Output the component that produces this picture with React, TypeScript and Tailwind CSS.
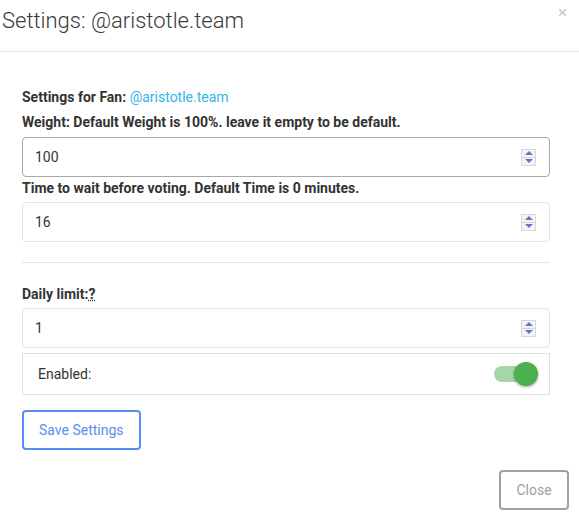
import React from "react";

function Spinner() {
  return (
    <div className="flex flex-col w-[15px] h-[17px] border border-[#d8d8d8] bg-[#f4f4f4]">
      <div className="flex-1 flex items-center justify-center border-b border-[#d8d8d8]">
        <div className="w-0 h-0 border-l-[4px] border-r-[4px] border-b-[4px] border-l-transparent border-r-transparent border-b-[#5d76c8]" />
      </div>
      <div className="flex-1 flex items-center justify-center">
        <div className="w-0 h-0 border-l-[4px] border-r-[4px] border-t-[4px] border-l-transparent border-r-transparent border-t-[#5d76c8]" />
      </div>
    </div>
  );
}

function NumField({ value, focused }: { value: string; focused?: boolean }) {
  return (
    <div
      className={`flex items-center justify-between h-[40px] rounded-[4px] border pl-[12px] pr-[13px] ${
        focused ? "border-[#a8a8a8]" : "border-[#e3e3e3]"
      }`}
    >
      <span className="text-[14px] text-[#333]">{value}</span>
      <Spinner />
    </div>
  );
}

export default function App() {
  return (
    <div
      className="w-[579px] h-[520px] bg-white text-[#333] relative"
      style={{ fontFamily: "Roboto, 'Liberation Sans', sans-serif" }}
    >
      <div className="h-[52px] border-b border-[#e5e5e5] flex items-start justify-between">
        <h4 className="text-[22px] font-light text-[#3a3a3a] pl-[2px] pt-[6px] leading-[30px]">
          Settings: @aristotle.team
        </h4>
        <span className="text-[#c8c8c8] text-[17px] leading-none pt-[4px] pr-[12px]">×</span>
      </div>
      <div className="pl-[22px] pr-[29px] pt-[36px] text-[14px]">
        <div className="font-bold leading-[18px]">
          Settings for Fan: <span className="font-normal text-[#33b5e5]">@aristotle.team</span>
        </div>
        <div className="font-bold leading-[18px] mt-[7px] mb-[6px]">
          Weight: Default Weight is 100%. leave it empty to be default.
        </div>
        <NumField value="100" focused />
        <div className="font-bold leading-[18px] mt-[2px] mb-[5px]">
          Time to wait before voting. Default Time is 0 minutes.
        </div>
        <NumField value="16" />
        <div className="border-t border-[#e5e5e5] mt-[20px]" />
        <div className="font-bold leading-[18px] mt-[22px] mb-[5px]">
          Daily limit:
          <abbr className="underline decoration-dotted">?</abbr>
        </div>
        <NumField value="1" />
        <div className="mt-[5px] h-[42px] border border-[#e0e0e0] flex items-center justify-between pl-[15px] pr-[13px]">
          <span className="text-[14px] text-[#333]">Enabled:</span>
          <div className="relative w-[42px] h-[24px] flex items-center">
            <div className="w-[40px] h-[16px] rounded-full bg-[#a5d6a7]" />
            <div className="absolute right-[-2px] top-0 w-[24px] h-[24px] rounded-full bg-[#4caf50] shadow-[0_1px_3px_rgba(0,0,0,0.35)]" />
          </div>
        </div>
        <button className="mt-[15px] h-[40px] px-[15px] rounded-[4px] border-2 border-[#5b8def] text-[#5b8def] text-[14px] bg-white">
          Save Settings
        </button>
      </div>
      <div className="flex justify-end pr-[10px] mt-[20px]">
        <button className="h-[40px] w-[70px] rounded-[4px] border-2 border-[#a0a0a0] text-[#a0a0a0] text-[14px] bg-white">
          Close
        </button>
      </div>
    </div>
  );
}
